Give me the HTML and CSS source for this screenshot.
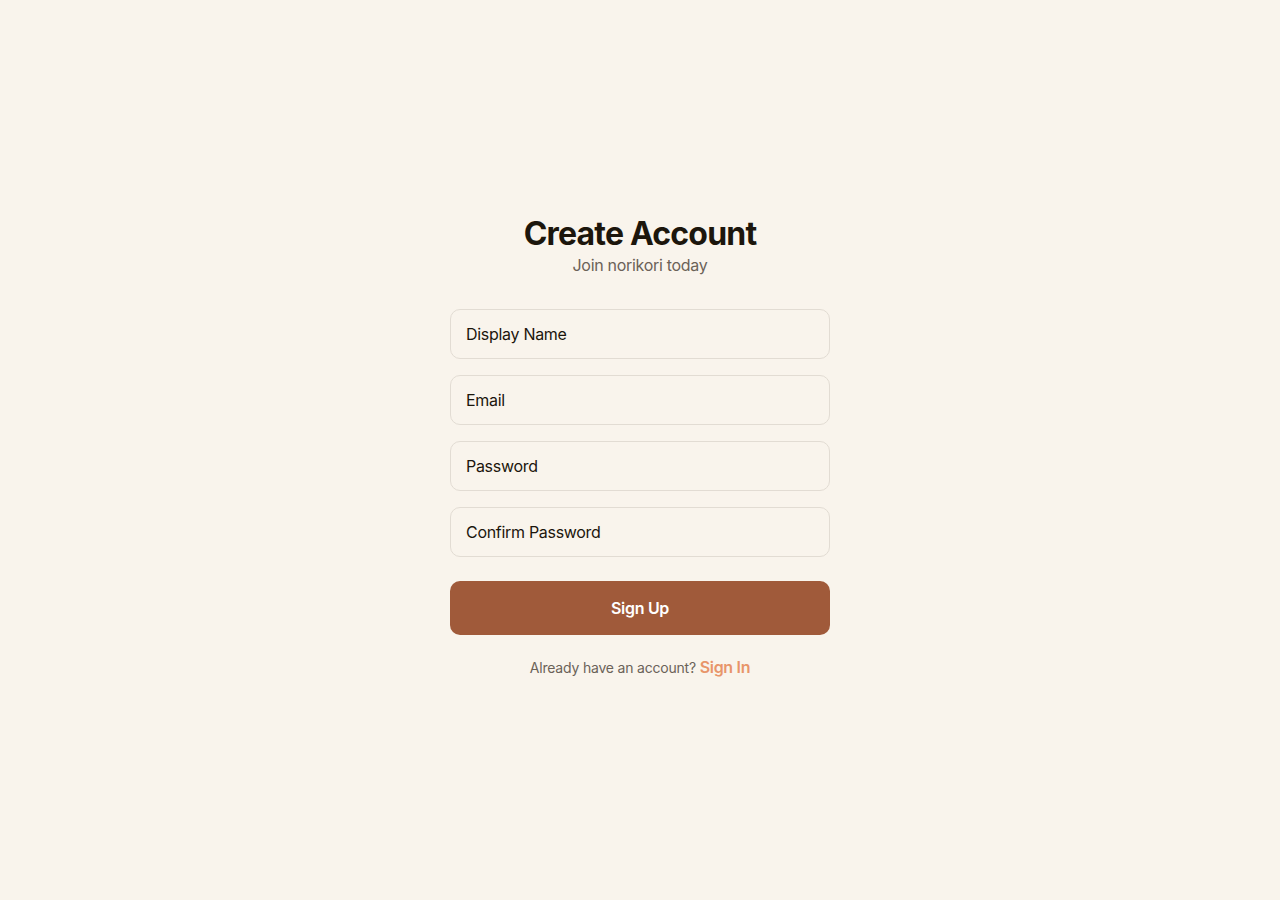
FILE: index.html
```html
<!DOCTYPE html>
<html lang="en">
<head>
<meta charset="utf-8">
<title>Create Account</title>
<link rel="stylesheet" href="styles.css">
</head>
<body>
<main class="page">
  <div class="card">
    <header class="head">
      <h1 class="title">Create Account</h1>
      <p class="subtitle">Join norikori today</p>
    </header>
    <form class="form">
      <div class="fields">
        <input class="field" type="text" placeholder="Display Name">
        <input class="field" type="email" placeholder="Email">
        <input class="field" type="password" placeholder="Password">
        <input class="field" type="password" placeholder="Confirm Password">
      </div>
      <button class="btn" type="button">Sign Up</button>
    </form>
    <p class="footer">Already have an account? <a class="link" href="#">Sign In</a></p>
  </div>
</main>
</body>
</html>
```
FILE: styles.css
```css
* { box-sizing: border-box; }
html, body { margin: 0; padding: 0; }
body {
  background: #f9f4ec;
  font-family: Inter, "Noto Sans", sans-serif;
  color: #1c160c;
}
.page {
  min-height: 100vh;
  padding-bottom: 8px;
  display: flex;
  align-items: center;
  justify-content: center;
}
.card {
  width: 380px;
  display: flex;
  flex-direction: column;
}
.head { text-align: center; }
.title {
  margin: 2px 0 0;
  font-size: 32px;
  line-height: 38px;
  font-weight: 700;
  letter-spacing: -0.8px;
  color: #1c160c;
}
.subtitle {
  margin: 0;
  font-size: 16px;
  line-height: 24px;
  letter-spacing: -0.3px;
  color: #6b6258;
}
.form {
  margin-top: 32px;
  display: flex;
  flex-direction: column;
  gap: 24px;
}
.fields {
  display: flex;
  flex-direction: column;
  gap: 16px;
}
.field {
  height: 50px;
  width: 100%;
  padding: 0 15px;
  border: 1px solid #e2dcd3;
  border-radius: 10px;
  background: #f9f4ec;
  font-family: inherit;
  font-size: 16px;
  letter-spacing: -0.3px;
  color: #1c160c;
  outline: none;
}
.field::placeholder { color: #1c160c; opacity: 1; }
.btn {
  height: 54px;
  width: 100%;
  border: none;
  border-radius: 10px;
  background: #a05a3a;
  color: #fff;
  font-family: inherit;
  font-size: 16px;
  font-weight: 600;
  letter-spacing: -0.3px;
  cursor: pointer;
}
.footer {
  margin: 20px 0 0;
  text-align: center;
  font-size: 14px;
  line-height: 24px;
  letter-spacing: -0.2px;
  color: #6b6258;
}
.link {
  color: #e8956a;
  font-size: 16px;
  font-weight: 600;
  letter-spacing: -0.3px;
  text-decoration: none;
}
```
